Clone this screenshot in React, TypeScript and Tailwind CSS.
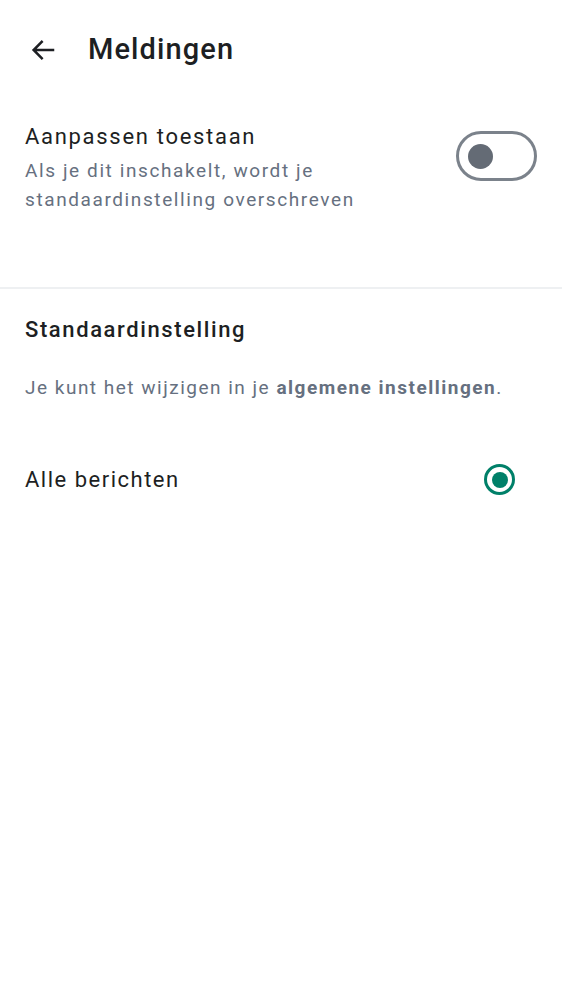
import React, { useState } from 'react';

const App: React.FC = () => {
  const [custom, setCustom] = useState(false);

  return (
    <div className="min-h-screen w-full bg-white font-['Roboto',sans-serif] text-[#1d1f23]">
      {/* header */}
      <div className="flex h-[100px] items-center pl-[28px]">
        <svg className="h-[30px] w-[30px]" viewBox="0 0 24 24" fill="none" stroke="#1d1f23" strokeWidth={2} strokeLinecap="square">
          <path d="M20 12H5M11 5.5L4.5 12l6.5 6.5" />
        </svg>
        <h1 className="ml-[30px] text-[29px] font-medium tracking-[1.1px]">Meldingen</h1>
      </div>

      {/* toggle row */}
      <div className="flex items-start justify-between pl-[25px] pr-[25px] pt-[22px] pb-[73px]">
        <div>
          <div className="text-[22px] leading-[30px] tracking-[1.7px]">Aanpassen toestaan</div>
          <div className="mt-[4px] text-[19px] leading-[29px] tracking-[1.6px] text-[#667080]">
            Als je dit inschakelt, wordt je
            <br />
            standaardinstelling overschreven
          </div>
        </div>
        <button
          onClick={() => setCustom(!custom)}
          className="mt-[9px] flex h-[50px] w-[81px] shrink-0 items-center rounded-full border-[3px] border-[#7b828b] px-[9px]"
        >
          <span className="h-[25px] w-[25px] rounded-full bg-[#646b75]" />
        </button>
      </div>

      <div className="h-[2px] bg-[#eef0f2]" />

      {/* default setting */}
      <div className="px-[25px]">
        <div className="pt-[26px] text-[22px] font-medium leading-[30px] tracking-[1.6px]">Standaardinstelling</div>
        <div className="mt-[28px] text-[19px] leading-[30px] tracking-[1.5px] text-[#667080]">
          Je kunt het wijzigen in je <span className="font-bold">algemene instellingen</span>.
        </div>
        <div className="mt-[61px] flex items-center justify-between pr-[22px]">
          <span className="text-[22px] leading-[30px] tracking-[1.5px]">Alle berichten</span>
          <span className="flex h-[31px] w-[31px] items-center justify-center rounded-full border-[3px] border-[#008069]">
            <span className="h-[16px] w-[16px] rounded-full bg-[#008069]" />
          </span>
        </div>
      </div>
    </div>
  );
};

export default App;
